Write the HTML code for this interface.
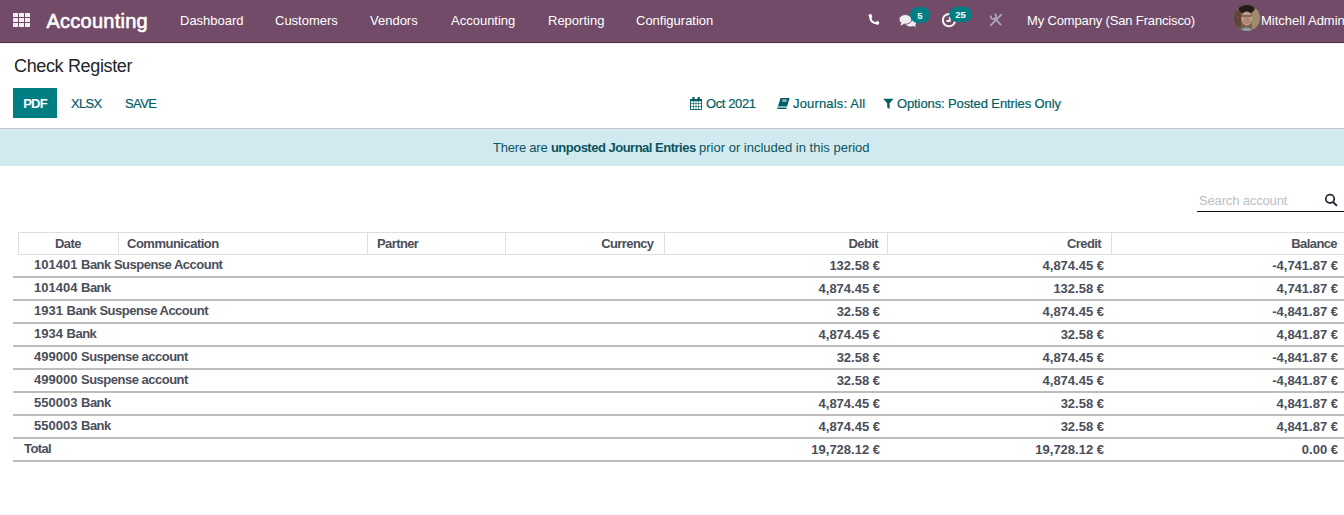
<!DOCTYPE html>
<html><head><meta charset="utf-8">
<style>
html,body{margin:0;padding:0;width:1344px;height:515px;overflow:hidden;background:#fff;font-family:"Liberation Sans",sans-serif;}
.t{position:absolute;white-space:nowrap;line-height:20px;font-size:13px;}
.b{font-weight:bold;}
.hdr{letter-spacing:-0.6px;}
.nm{letter-spacing:-0.5px;}
.r{text-align:right;}
#nav{position:absolute;left:0;top:0;width:1344px;height:42px;background:#714b67;border-bottom:1px solid #512f48;}
#navshadow{position:absolute;left:0;top:43px;width:1344px;height:1px;background:#f2f0f1;}
.nv{color:#fff;}
.teal{color:#015e64;-webkit-text-stroke:0.2px #015e64;}
.hdr{color:#4a4e5a;}
.cell{color:#4a4e5a;}
.rowline{position:absolute;left:13px;width:1331px;height:2px;background:#bdbdbd;}
.vline{position:absolute;top:232px;width:1px;height:23px;background:#dfdfdf;}
svg{position:absolute;}
</style></head><body>
<!-- NAVBAR -->
<div id="nav"></div>
<div id="navshadow"></div>
<!-- apps grid -->
<div style="position:absolute;left:13px;top:13px;width:17px;height:14px;">
  <div style="position:absolute;left:0;top:0;width:5px;height:4px;background:#f2eef1"></div>
  <div style="position:absolute;left:6px;top:0;width:5px;height:4px;background:#f2eef1"></div>
  <div style="position:absolute;left:12px;top:0;width:5px;height:4px;background:#f2eef1"></div>
  <div style="position:absolute;left:0;top:5px;width:5px;height:4px;background:#f2eef1"></div>
  <div style="position:absolute;left:6px;top:5px;width:5px;height:4px;background:#f2eef1"></div>
  <div style="position:absolute;left:12px;top:5px;width:5px;height:4px;background:#f2eef1"></div>
  <div style="position:absolute;left:0;top:10px;width:5px;height:4px;background:#f2eef1"></div>
  <div style="position:absolute;left:6px;top:10px;width:5px;height:4px;background:#f2eef1"></div>
  <div style="position:absolute;left:12px;top:10px;width:5px;height:4px;background:#f2eef1"></div>
</div>
<div class="t nv" style="left:46.5px;top:11px;font-size:20px;letter-spacing:0.25px;-webkit-text-stroke:0.6px #fff;">Accounting</div>
<div class="t nv" style="left:180px;top:11px;">Dashboard</div>
<div class="t nv" style="left:275px;top:11px;">Customers</div>
<div class="t nv" style="left:370px;top:11px;">Vendors</div>
<div class="t nv" style="left:451px;top:11px;">Accounting</div>
<div class="t nv" style="left:548px;top:11px;">Reporting</div>
<div class="t nv" style="left:636px;top:11px;">Configuration</div>

<!-- right icons -->
<div class="t nv" style="left:1027px;top:11px;letter-spacing:-0.15px;">My Company (San Francisco)</div>
<div style="position:absolute;left:1234px;top:5px;width:26px;height:26px;border-radius:50%;overflow:hidden;"><svg width="26" height="26" viewBox="0 0 26 26" style="left:0;top:0;">
  <g>
    <rect width="26" height="26" fill="#7a604e"/>
    <rect x="18" y="4" width="8" height="20" fill="#a08a6e"/>
    <rect x="0" y="6" width="7" height="16" fill="#5e4438"/>
    <ellipse cx="12.5" cy="4" rx="8" ry="4.5" fill="#221c1c"/>
    <ellipse cx="12.8" cy="13.5" rx="5.4" ry="7" fill="#bf9f8a"/>
    <ellipse cx="12.8" cy="15.5" rx="3.6" ry="3.6" fill="#b08570"/>
    <path d="M7.5,11 H17.5" stroke="#3a2f30" stroke-width="1.2"/>
    <path d="M5,26 Q12.5,19 20,26 Z" fill="#8fa1a8"/>
    <circle cx="4" cy="12" r="1" fill="#b03a2a"/>
    <circle cx="5" cy="8" r="0.8" fill="#a03524"/>
  </g>
</svg></div>
<div class="t nv" style="left:1261px;top:11px;">Mitchell Admin</div>

<!-- TITLE -->
<div class="t" style="left:14px;top:56px;font-size:18px;color:#212529;letter-spacing:-0.35px;">Check Register</div>
<!-- buttons -->
<div style="position:absolute;left:13px;top:88px;width:44px;height:30px;background:#017e84;"></div>
<div class="t b" style="left:13px;width:44px;text-align:center;top:94px;color:#fff;letter-spacing:-0.8px;text-indent:0;">PDF</div>
<div class="t teal" style="left:71px;top:94px;letter-spacing:-0.7px;">XLSX</div>
<div class="t teal" style="left:125px;top:94px;letter-spacing:-0.6px;">SAVE</div>

<div class="t teal" style="left:706px;top:94px;letter-spacing:-0.4px;">Oct 2021</div>
<div class="t teal" style="left:793px;top:94px;letter-spacing:0.17px;">Journals: All</div>
<div class="t teal" style="left:897px;top:94px;letter-spacing:-0.11px;">Options: Posted Entries Only</div>

<!-- BANNER -->
<div style="position:absolute;left:0;top:128px;width:1344px;height:1px;background:#c8c4cc;"></div>
<div style="position:absolute;left:0;top:129px;width:1344px;height:37px;background:#d1eaf0;"></div>
<div class="t" style="left:493px;top:138px;color:#0c5460;letter-spacing:-0.21px;">There are <b style="letter-spacing:-0.5px">unposted Journal Entries</b> <span style="letter-spacing:0">prior or included in this period</span></div>

<!-- SEARCH -->
<div class="t" style="left:1199px;top:191px;color:#b8c0c8;letter-spacing:-0.15px;">Search account</div>
<div style="position:absolute;left:1197px;top:211px;width:147px;height:1px;background:#111;"></div>

<!-- TABLE HEADER -->
<div style="position:absolute;left:18px;top:232px;width:1326px;height:1px;background:#dfdfdf;"></div>
<div style="position:absolute;left:18px;top:254px;width:1326px;height:1px;background:#dfdfdf;"></div>
<div class="vline" style="left:18px;"></div>
<div class="vline" style="left:118px;"></div>
<div class="vline" style="left:367px;"></div>
<div class="vline" style="left:505px;"></div>
<div class="vline" style="left:664px;"></div>
<div class="vline" style="left:887px;"></div>
<div class="vline" style="left:1111px;"></div>
<div class="t b hdr" style="left:55px;top:234px;">Date</div>
<div class="t b hdr" style="left:127px;top:234px;letter-spacing:-0.5px;">Communication</div>
<div class="t b hdr" style="left:377px;top:234px;">Partner</div>
<div class="t b hdr r" style="right:690.5px;top:234px;">Currency</div>
<div class="t b hdr r" style="right:466px;top:234px;">Debit</div>
<div class="t b hdr r" style="right:243px;top:234px;">Credit</div>
<div class="t b hdr r" style="right:7px;top:234px;">Balance</div>

<!-- ROWS -->
<div class="t b cell nm" style="left:34px;top:255px;"><span style="letter-spacing:0">101401 </span>Bank Suspense Account</div>
<div class="t b cell r" style="right:464px;top:256px;">132.58 €</div>
<div class="t b cell r" style="right:240px;top:256px;">4,874.45 €</div>
<div class="t b cell r" style="right:6px;top:256px;">-4,741.87 €</div>
<div class="rowline" style="top:276px;"></div>
<div class="t b cell nm" style="left:34px;top:278px;"><span style="letter-spacing:0">101404 </span>Bank</div>
<div class="t b cell r" style="right:464px;top:279px;">4,874.45 €</div>
<div class="t b cell r" style="right:240px;top:279px;">132.58 €</div>
<div class="t b cell r" style="right:6px;top:279px;">4,741.87 €</div>
<div class="rowline" style="top:299px;"></div>
<div class="t b cell nm" style="left:34px;top:301px;"><span style="letter-spacing:0">1931 </span>Bank Suspense Account</div>
<div class="t b cell r" style="right:464px;top:302px;">32.58 €</div>
<div class="t b cell r" style="right:240px;top:302px;">4,874.45 €</div>
<div class="t b cell r" style="right:6px;top:302px;">-4,841.87 €</div>
<div class="rowline" style="top:322px;"></div>
<div class="t b cell nm" style="left:34px;top:324px;"><span style="letter-spacing:0">1934 </span>Bank</div>
<div class="t b cell r" style="right:464px;top:325px;">4,874.45 €</div>
<div class="t b cell r" style="right:240px;top:325px;">32.58 €</div>
<div class="t b cell r" style="right:6px;top:325px;">4,841.87 €</div>
<div class="rowline" style="top:345px;"></div>
<div class="t b cell nm" style="left:34px;top:347px;"><span style="letter-spacing:0">499000 </span>Suspense account</div>
<div class="t b cell r" style="right:464px;top:348px;">32.58 €</div>
<div class="t b cell r" style="right:240px;top:348px;">4,874.45 €</div>
<div class="t b cell r" style="right:6px;top:348px;">-4,841.87 €</div>
<div class="rowline" style="top:368px;"></div>
<div class="t b cell nm" style="left:34px;top:370px;"><span style="letter-spacing:0">499000 </span>Suspense account</div>
<div class="t b cell r" style="right:464px;top:371px;">32.58 €</div>
<div class="t b cell r" style="right:240px;top:371px;">4,874.45 €</div>
<div class="t b cell r" style="right:6px;top:371px;">-4,841.87 €</div>
<div class="rowline" style="top:391px;"></div>
<div class="t b cell nm" style="left:34px;top:393px;"><span style="letter-spacing:0">550003 </span>Bank</div>
<div class="t b cell r" style="right:464px;top:394px;">4,874.45 €</div>
<div class="t b cell r" style="right:240px;top:394px;">32.58 €</div>
<div class="t b cell r" style="right:6px;top:394px;">4,841.87 €</div>
<div class="rowline" style="top:414px;"></div>
<div class="t b cell nm" style="left:34px;top:416px;"><span style="letter-spacing:0">550003 </span>Bank</div>
<div class="t b cell r" style="right:464px;top:417px;">4,874.45 €</div>
<div class="t b cell r" style="right:240px;top:417px;">32.58 €</div>
<div class="t b cell r" style="right:6px;top:417px;">4,841.87 €</div>
<div class="rowline" style="top:437px;"></div>
<div class="t b cell hdr" style="left:24px;top:439px;">Total</div>
<div class="t b cell r" style="right:464px;top:440px;">19,728.12 €</div>
<div class="t b cell r" style="right:240px;top:440px;">19,728.12 €</div>
<div class="t b cell r" style="right:6px;top:440px;">0.00 €</div>
<div class="rowline" style="top:460px;"></div>
<!-- ICON OVERLAY -->
<svg width="1344" height="515" style="left:0;top:0;">
  <!-- phone -->
  <path d="M870.2,16 Q869.8,22.4 876.8,23.6" fill="none" stroke="#fff" stroke-width="2" stroke-linecap="round"/>
  <path d="M868.4,15.4 Q869.6,13.6 871.4,14.2 L872.4,17.2 L870.4,18.2 Z" fill="#fff"/>
  <path d="M875.6,22.8 L877,20.8 L879.2,22 Q879.6,24.4 877.6,25 Z" fill="#fff"/>
  <!-- comments -->
  <ellipse cx="910.6" cy="23" rx="5.4" ry="3.6" fill="#f1eef0"/>
  <path d="M912.6,25.2 L916,27.4 L914.8,24.2 Z" fill="#f1eef0"/>
  <ellipse cx="905.4" cy="19.4" rx="6.4" ry="4.8" fill="#f1eef0" stroke="#714b67" stroke-width="0.9"/>
  <path d="M901.4,22.6 L900.4,25.8 L904.8,23.6 Z" fill="#f1eef0"/>
  <!-- badge 5 -->
  <rect x="910" y="7" width="20" height="16" rx="8" ry="8" fill="#017e84"/>
  <!-- clock -->
  <circle cx="949" cy="20.1" r="6.2" fill="none" stroke="#f4f1f3" stroke-width="2"/>
  <path d="M946.4,21 L949.8,21 L949.8,16.8" stroke="#f4f1f3" stroke-width="1.8" fill="none"/>
  <!-- badge 25 -->
  <rect x="949.2" y="6.8" width="22.8" height="15.2" rx="7.6" ry="7.6" fill="#017e84"/>
  <!-- tools -->
  <path d="M990.9,25.1 L1001.3,14.7" stroke="#aaa6b6" stroke-width="1.9" stroke-linecap="round"/>
  <path d="M994.8,18.4 L1000.6,24.6" stroke="#aaa6b6" stroke-width="1.9" stroke-linecap="round"/>
  <path d="M990.9,15.6 A2.7,2.7 0 1 0 994.6,14" fill="none" stroke="#aaa6b6" stroke-width="1.7"/>
  <!-- calendar -->
  <rect x="690.5" y="99.5" width="11" height="10" fill="none" stroke="#015e64" stroke-width="0.9"/>
  <rect x="690" y="99" width="12" height="2.2" fill="#015e64"/>
  <path d="M690,103.5 H702 M690,106.5 H702 M693.5,101 V110 M696,101 V110 M698.5,101 V110" stroke="#015e64" stroke-width="0.6"/>
  <rect x="692.4" y="97" width="2.2" height="3" fill="#015e64"/>
  <rect x="697.6" y="97" width="2.2" height="3" fill="#015e64"/>
  <!-- book -->
  <path d="M780.6,98 L789.6,98 L786.8,107.2 L777.6,107.2 Z" fill="#015e64"/>
  <path d="M777.4,107.6 L786.6,107.6 L786.4,108.9 L777.4,108.9 Z" fill="#015e64"/>
  <path d="M777.8,106.8 L786.8,106.8" stroke="#ffffff" stroke-width="0.8"/>
  <rect x="782.2" y="99.4" width="4.4" height="2.4" fill="#9fb9c0"/>
  <!-- filter -->
  <path d="M883.2,98.8 L893.6,98.8 L889.6,103.2 L889.6,109 L887.2,107.6 L887.2,103.2 Z" fill="#015e64"/>
  <!-- search -->
  <circle cx="1330" cy="198.8" r="4.2" fill="none" stroke="#2b2d3c" stroke-width="1.8"/>
  <path d="M1333,202 L1336.4,205.2" stroke="#2b2d3c" stroke-width="2" stroke-linecap="round"/>
</svg>
<div class="t b" style="left:910px;width:20px;text-align:center;top:5.5px;font-size:9.5px;color:#fff;">5</div>
<div class="t b" style="left:949px;width:23px;text-align:center;top:4.5px;font-size:9.5px;color:#fff;">25</div>
</body></html>
